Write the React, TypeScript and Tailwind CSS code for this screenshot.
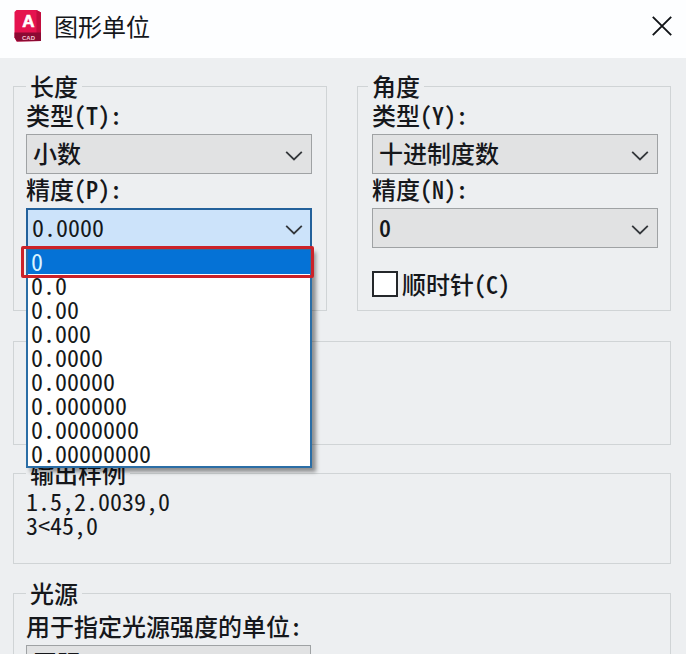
import { useState } from 'react';
import type { ReactNode } from 'react';
import clsx from 'clsx';

const PRECISIONS = [
  '0',
  '0.0',
  '0.00',
  '0.000',
  '0.0000',
  '0.00000',
  '0.000000',
  '0.0000000',
  '0.00000000',
];

interface GroupProps {
  title?: string;
  className?: string;
  children?: ReactNode;
}

function Group({ title, className, children }: GroupProps) {
  return (
    <fieldset className={clsx('min-w-0 border border-[#d0d4d6]', className)}>
      {title && <legend className="px-1 leading-6">{title}</legend>}
      {children}
    </fieldset>
  );
}

interface SelectFieldProps {
  id: string;
  label: string;
  options: string[];
  value?: string;
  open?: boolean;
  compact?: boolean;
  onChange?: (value: string) => void;
  children?: ReactNode;
}

function SelectField({
  id,
  label,
  options,
  value,
  open,
  compact,
  onChange,
  children,
}: SelectFieldProps) {
  return (
    <div>
      <label htmlFor={id} className="mb-1 block leading-[30px] whitespace-nowrap">
        {label}
      </label>
      <div className="relative">
        <select
          id={id}
          value={value ?? options[0]}
          onChange={(e) => onChange?.(e.target.value)}
          className={clsx(
            'block w-full appearance-none pr-8 pb-0.5 outline-none',
            compact ? 'h-8' : 'h-10',
            open
              ? 'border-2 border-[#23619b] bg-[#cce3fa] pl-1 font-normal'
              : 'border border-[#9fa2a4] bg-[#e1e2e3] pl-1.5'
          )}
        >
          {options.map((option) => (
            <option key={option}>{option}</option>
          ))}
        </select>
        <svg
          viewBox="0 0 18 12"
          className={clsx(
            'pointer-events-none absolute right-[9px] h-3 w-[18px]',
            compact ? 'top-3' : 'top-4'
          )}
          fill="none"
          stroke="#33373b"
          strokeWidth="1.8"
        >
          <path d="M1.200 1.800 9 9.400l7.800-7.600" />
        </svg>
        {children}
      </div>
    </div>
  );
}

function AppIcon() {
  return (
    <svg
      viewBox="0 0 30 34"
      className="h-[34px] w-[30px] font-['Liberation_Sans',sans-serif] font-bold"
      textAnchor="middle"
      aria-hidden="true"
    >
      <path d="M3.500 1h20l4.500 2.500v28.500l-24.500.5-2-4V3z" fill="#e5134f" />
      <path d="M23.500 1 28 3.500V32l-4.500-8z" fill="#c20d3e" />
      <path d="M1.500 23.500H28V32l-24 .5-2.500-4z" fill="#8c0a33" />
      <text x="15.500" y="18" fontSize="17" fill="#fff" stroke="#fff" strokeWidth="0.600">
        A
      </text>
      <text x="15.500" y="30.500" fontSize="6" fill="#f6cbd6">
        CAD
      </text>
    </svg>
  );
}

export default function App() {
  const [precision, setPrecision] = useState('0.0000');
  const [open, setOpen] = useState(true);

  const pick = (value: string) => {
    setPrecision(value);
    setOpen(false);
  };

  return (
    <div className="flex h-screen flex-col overflow-hidden bg-[#edeff1] font-['Noto_Sans_CJK_SC',sans-serif] text-2xl font-medium text-[#15171b]">
      <header className="flex h-[58px] shrink-0 items-center justify-between bg-[#fdfeff] pr-3 pb-1.5 pl-[13px]">
        <div className="flex items-center gap-[11px]">
          <AppIcon />
          <h1 className="leading-8 font-normal">图形单位</h1>
        </div>
        <button type="button" aria-label="关闭" className="p-0.5">
          <svg viewBox="0 0 20 20" className="size-5" stroke="#111418" strokeWidth="1.9">
            <path d="M.8.8l18.400 18.400M19.200.8.8 19.200" />
          </svg>
        </button>
      </header>

      <form className="flex flex-col pt-4 pr-[15px] pl-[13px] [font-feature-settings:'hwid']">
        <div className="grid grid-cols-2 gap-[30px]">
          <Group title="长度" className="pr-3.5 pl-3">
            <div className="pt-0.5">
              <SelectField id="length-type" label="类型(T):" options={['小数']} />
              <SelectField
                id="length-precision"
                label="精度(P):"
                options={PRECISIONS}
                value={precision}
                open={open}
                onChange={pick}
              >
                {open && (
                  <ul
                    role="listbox"
                    aria-label="精度"
                    className="absolute top-full right-0 left-0 z-10 border-2 border-[#2b6ea6] bg-white font-normal shadow-[4px_4px_4px_rgba(0,0,0,0.4)]"
                  >
                    {PRECISIONS.map((item, index) => (
                      <li
                        key={item}
                        role="option"
                        aria-selected={index === 0}
                        onClick={() => pick(item)}
                        className={clsx(
                          'relative h-6 pl-[3px] leading-[22px]',
                          index === 0 && 'bg-[#0572d6] text-[#d9f4ff]'
                        )}
                      >
                        {item}
                        {index === 0 && (
                          <span className="absolute -inset-y-1 -right-1 -left-[7px] rounded-xs border-[3px] border-[#cb2229]" />
                        )}
                      </li>
                    ))}
                  </ul>
                )}
              </SelectField>
            </div>
          </Group>

          <Group title="角度" className="pr-3 pb-2.5 pl-2.5">
            <div className="pt-0.5 pl-1">
              <SelectField id="angle-type" label="类型(Y):" options={['十进制度数']} />
              <SelectField id="angle-precision" label="精度(N):" options={['0']} />
              <label className="mt-5 flex items-center gap-1 leading-8">
                <input
                  type="checkbox"
                  className="size-[26px] appearance-none border-2 border-[#24272a] bg-white checked:bg-[#0572d6]"
                />
                顺时针(C)
              </label>
            </div>
          </Group>
        </div>

        <Group className="mt-[30px] h-[104px]" />

        <Group title="输出样例" className="mt-4 pb-[26px] pl-3">
          <p className="pt-1 leading-6 font-normal">
            1.5,2.0039,0
            <br />
            3&lt;45,0
          </p>
        </Group>

        <Group title="光源" className="mt-[17px] px-3 pb-3">
          <div className="w-[calc(50%-31px)] pt-1.5">
            <SelectField
              id="light-unit"
              label="用于指定光源强度的单位:"
              options={['国际']}
              compact
            />
          </div>
        </Group>
      </form>
    </div>
  );
}
